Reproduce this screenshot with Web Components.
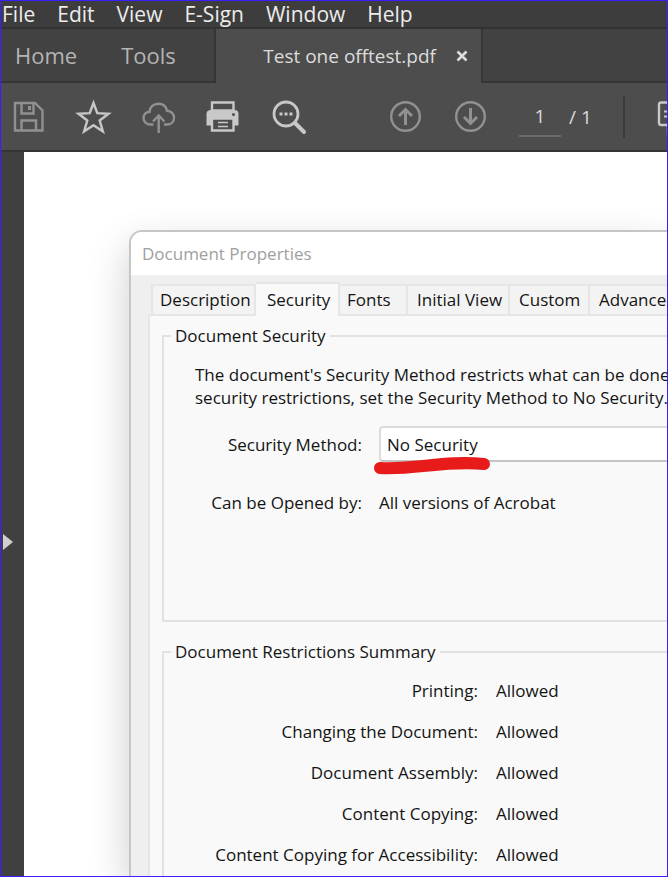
<!DOCTYPE html>
<html lang="en">
<head>
<meta charset="utf-8">
<title>Test one offtest.pdf</title>
<style>
  html, body { margin: 0; height: 100%; overflow: hidden; }
  body { font-family: "Open Sans", "Noto Sans", sans-serif; background: #fff; }
</style>
</head>
<body>
<pdf-app></pdf-app>

<template id="menu-bar">
  <style>
    :host { display: block; background: #3d3d3d; border-bottom: 2px solid #323232; }
    nav { display: flex; gap: 22px; padding: 0 1px; height: 26px; overflow: hidden; }
    button { all: unset; font-size: 21px; line-height: 26px; color: #ececec; white-space: nowrap; }
  </style>
  <nav aria-label="Menu">
    <button>File</button><button>Edit</button><button>View</button><button>E-Sign</button><button>Window</button><button>Help</button>
  </nav>
</template>

<template id="tab-strip">
  <style>
    :host { display: grid; grid-template-columns: 215px 265px 1fr; height: 54px; background: #4d4d4d; }
    .side { display: flex; align-items: center; gap: 44px; padding-left: 14px; background: #424242; border-bottom: 2px solid #353535; }
    .home { border-right: 2px solid #353535; }
    .rest { border-left: 2px solid #353535; }
    button { all: unset; white-space: nowrap; font-size: 22px; line-height: 30px; color: #b4b4b4; }
    .active { display: flex; align-items: center; justify-content: flex-end; gap: 20px; padding-right: 13px; }
    .active button { font-size: 19px; color: #dcdcdc; }
    svg { display: block; }
  </style>
  <div class="side home"><button>Home</button><button>Tools</button></div>
  <div class="active">
    <button>Test one offtest.pdf</button>
    <button aria-label="Close tab"><svg width="12" height="12" viewBox="0 0 12 12"><path d="M1.5 1.5l9 9M10.5 1.5l-9 9" stroke="#dcdcdc" stroke-width="2.6"/></svg></button>
  </div>
  <div class="side rest"></div>
</template>

<template id="tool-bar">
  <style>
    :host { display: flex; align-items: center; gap: 33px; height: 67px; padding-left: 12px; background: #4d4d4d; border-bottom: 2px solid #353535; overflow: hidden; color: #c8c8c8; }
    button { all: unset; flex: none; width: 32px; height: 36px; }
    button.dim { color: #919191; }
    .nav { display: flex; gap: 33px; padding-left: 51px; }
    svg { display: block; width: 32px; height: 36px; fill: none; stroke: currentColor; stroke-width: 2.4; overflow: visible; }
    label { display: flex; align-items: center; gap: 8px; font-size: 19px; line-height: 38px; color: #dcdcdc; white-space: nowrap; }
    input { box-sizing: border-box; width: 42px; height: 40px; padding: 0; border: 0; border-bottom: 2px solid #6a6a6a; background: none; font: inherit; color: inherit; text-align: center; outline: 0; }
    .sep { flex: none; width: 2px; height: 42px; background: #3c3c3c; margin-left: -2px; }
  </style>
  <button class="dim" aria-label="Save"><svg viewBox="0 0 32 36"><path d="M2 4h20l7.500 7.500V31.500H2z"/><path d="M8.500 4v10.500h12V4M8.500 31v-9.500h14.500V31"/><path d="M16.500 7v4" stroke-width="3"/></svg></button>
  <button aria-label="Star"><svg viewBox="0 0 32 36"><path d="M15.500 4l3.800 10.200 11.200.5-8.800 6.800 3.200 11-9.400-6.300-9.400 6.300 3.200-11L.500 14.700l11.200-.5z"/></svg></button>
  <button class="dim" aria-label="Upload"><svg viewBox="0 0 32 36"><path d="M10.500 25.500H7.500C3.500 25.500.500 22.500.500 19c0-3.400 2.500-6 6-6.200C7 8 10.500 4.800 15.500 4.800c4.400 0 7.500 2.600 8.500 6.900 4 .3 7 3.300 7 7 0 4-3 6.800-7 6.800h-3"/><path d="M15.700 34V17M10 22.500l5.700-6 5.700 6"/></svg></button>
  <button aria-label="Print"><svg viewBox="0 0 32 36"><path d="M3 11h23.500q4 0 4 4v11.500h-32V15q0-4 4.500-4z" fill="currentColor" stroke="none"/><path d="M4 11.500V3.500h21.500v8z" fill="#4d4d4d"/><path d="M4 19.500h21.500v12H4z" fill="#4d4d4d"/><path d="M10 23.500h10M10 27.500h10" stroke-width="1.700"/><circle cx="25.500" cy="15.500" r="1.500" fill="#4d4d4d" stroke="none"/></svg></button>
  <button aria-label="Find"><svg viewBox="0 0 32 36"><circle cx="13" cy="15" r="12" stroke-width="2.800"/><path d="M22 24l9 9" stroke-width="4" stroke-linecap="round"/><path d="M6.500 15h3M11.500 15h3M16.500 15h3" stroke-width="3"/></svg></button>
  <div class="nav">
    <button class="dim" aria-label="Previous page"><svg viewBox="0 0 32 36"><circle cx="16.500" cy="17.500" r="14.300"/><path d="M16.500 26V11M10 17l6.500-6.500L23 17" stroke-width="3"/></svg></button>
    <button class="dim" aria-label="Next page"><svg viewBox="0 0 32 36"><circle cx="16.500" cy="17.500" r="14.300"/><path d="M16.500 9v15M10 18l6.500 6.500L23 18" stroke-width="3"/></svg></button>
  </div>
  <label><input value="1" aria-label="Page number"><span>/ 1</span></label>
  <span class="sep"></span>
  <button aria-label="Comment"><svg viewBox="0 0 32 36"><path d="M3 3.500h26q2 0 2 2V24q0 2-2 2H16l-6 7v-7H3q-2 0-2-2V5.500q0-2 2-2z"/><path d="M6 12.500h20M6 17.500h20" stroke-width="2"/></svg></button>
</template>

<template id="side-rail">
  <style>
    :host { display: flex; align-items: center; flex: none; width: 23px; background: #404040; }
    button { all: unset; padding: 0 0 0 2px; margin-top: 56px; }
    svg { display: block; }
  </style>
  <button aria-label="Open navigation pane"><svg width="10" height="16" viewBox="0 0 10 16"><path d="M0 0l10 8-10 8z" fill="#cfcfcf"/></svg></button>
</template>

<template id="group-box">
  <style>
    :host { display: block; }
    fieldset { box-sizing: border-box; height: 100%; min-width: 0; margin: 0; padding: 0; border: 2px solid #e2e2e2; border-right: 0; }
    legend { margin-left: 7px; padding: 0 4px; font-size: 17px; line-height: 24px; white-space: nowrap; }
  </style>
  <fieldset><legend><slot name="title"></slot></legend><slot></slot></fieldset>
</template>

<template id="security-fields">
  <style>
    :host { display: block; font-size: 17px; line-height: 23px; padding: 15px 0 0 31px; white-space: nowrap; }
    p { margin: 0 0 17px; }
    .fields { display: grid; grid-template-columns: 167px 1fr; column-gap: 17px; row-gap: 29px; align-items: center; }
    .name { text-align: right; }
    .pick { position: relative; display: grid; }
    select { appearance: none; box-sizing: border-box; width: 100%; height: 36px; padding: 0 6px; border: 2px solid #dcdcdc; border-right: 0; border-bottom-color: #c4c4c4; border-radius: 4px 0 0 4px; background: #fff; font: inherit; color: inherit; outline: 0; }
    .mark { position: absolute; left: -7px; top: 29px; pointer-events: none; }
  </style>
  <p>The document's Security Method restricts what can be done to<br>security restrictions, set the Security Method to No Security.</p>
  <div class="fields">
    <label class="name" for="method">Security Method:</label>
    <div class="pick">
      <select id="method"><option>No Security</option></select>
      <svg class="mark" width="124" height="22" viewBox="0 0 124 22"><path d="M8 13C42 15 74 5 112 9" fill="none" stroke="#e81b1b" stroke-width="12" stroke-linecap="round"/></svg>
    </div>
    <span class="name">Can be Opened by:</span>
    <span>All versions of Acrobat</span>
  </div>
</template>

<template id="restriction-table">
  <style>
    :host { display: block; padding-top: 6px; }
    table { border-collapse: collapse; font-size: 17px; line-height: 23px; white-space: nowrap; }
    th, td { height: 41px; padding: 0; box-sizing: border-box; }
    th { width: 314px; text-align: right; font-weight: 400; }
    td { padding-left: 18px; }
  </style>
  <table>
    <tr><th scope="row">Printing:</th><td>Allowed</td></tr>
    <tr><th scope="row">Changing the Document:</th><td>Allowed</td></tr>
    <tr><th scope="row">Document Assembly:</th><td>Allowed</td></tr>
    <tr><th scope="row">Content Copying:</th><td>Allowed</td></tr>
    <tr><th scope="row">Content Copying for Accessibility:</th><td>Allowed</td></tr>
  </table>
</template>

<template id="properties-dialog">
  <style>
    :host { display: flex; flex-direction: column; box-sizing: border-box; overflow: hidden; background: #efefef; border: 2px solid #c6c6c6; border-width: 2px 0 0 2px; border-radius: 13px 0 0 0; box-shadow: 0 16px 40px rgba(0,0,0,.2); color: #141414; }
    header { flex: none; padding: 0 11px; background: #fff; font-size: 17px; line-height: 43px; color: #a0a0a0; }
    .tabs { flex: none; display: grid; grid-template-columns: 105px 84px 68px 102px 80px 110px; align-items: end; height: 39px; margin-left: 20px; position: relative; }
    button { all: unset; box-sizing: border-box; height: 30px; padding-left: 7px; border: 2px solid #e6e6e6; border-width: 2px 2px 0 0; background: #f3f3f3; font-size: 17px; line-height: 28px; white-space: nowrap; }
    button:first-child { border-left-width: 2px; }
    button.wide { padding-left: 9px; }
    button[aria-selected=true] { height: 34px; margin-bottom: -2px; padding-left: 11px; background: #f9f9f9; line-height: 28px; }
    .panel { flex: 1; margin-left: 17px; padding: 8px 0 0 12px; border: 2px solid #e6e6e6; border-width: 2px 0 0 2px; background: #f9f9f9; }
    group-box.security { height: 298px; margin-bottom: 18px; }
    group-box.limits { height: 260px; }
  </style>
  <header>Document Properties</header>
  <div class="tabs" role="tablist">
    <button role="tab">Description</button><button role="tab" aria-selected="true">Security</button><button role="tab">Fonts</button><button role="tab" class="wide">Initial View</button><button role="tab" class="wide">Custom</button><button role="tab" class="wide">Advanced</button>
  </div>
  <div class="panel">
    <group-box class="security"><span slot="title">Document Security</span><security-fields></security-fields></group-box>
    <group-box class="limits"><span slot="title">Document Restrictions Summary</span><restriction-table></restriction-table></group-box>
  </div>
</template>

<template id="pdf-app">
  <style>
    :host { display: flex; flex-direction: column; box-sizing: border-box; height: 100vh; overflow: hidden; border: 1px solid #3a1eff; }
    main { display: flex; flex: 1; min-height: 0; }
    .page { flex: 1; min-width: 0; display: grid; padding: 78px 0 0 105px; overflow: hidden; background: #fff; }
    properties-dialog { min-width: 0; }
  </style>
  <menu-bar></menu-bar>
  <tab-strip></tab-strip>
  <tool-bar></tool-bar>
  <main><side-rail></side-rail><div class="page"><properties-dialog></properties-dialog></div></main>
</template>

<script>
  const define = name => customElements.define(name, class extends HTMLElement {
    constructor() {
      super();
      this.attachShadow({ mode: 'open' }).append(document.getElementById(name).content.cloneNode(true));
    }
  });
  ['menu-bar', 'tab-strip', 'tool-bar', 'side-rail', 'group-box', 'security-fields',
   'restriction-table', 'properties-dialog', 'pdf-app'].forEach(define);
</script>
</body>
</html>
